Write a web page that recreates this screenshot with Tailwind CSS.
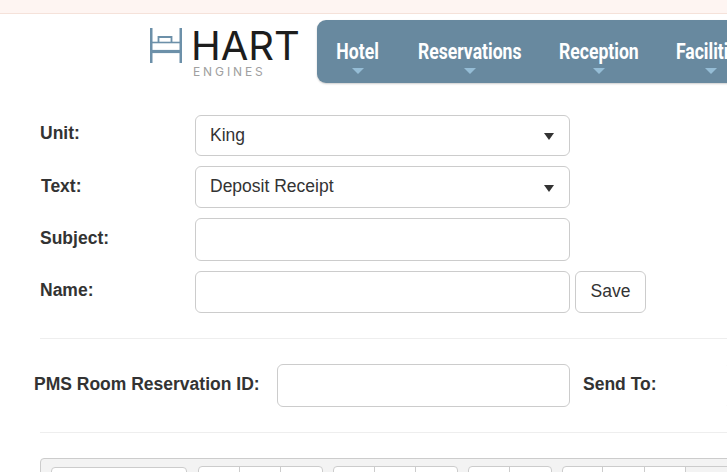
<!DOCTYPE html>
<html>
<head>
<meta charset="utf-8">
<script src="https://cdn.jsdelivr.net/npm/@tailwindcss/browser@4"></script>
</head>
<body class="bg-white overflow-hidden">
<div class="w-[727px] h-[472px] overflow-hidden font-['Liberation_Sans',Arial,sans-serif] text-[#333]">
  <div class="h-[14px] bg-[#fef5f2] border-b border-[#f5e2da]"></div>
  <header class="flex items-start h-[69px] pt-[6px]">
    <div class="relative w-[317px] h-[63px] shrink-0">
      <svg class="absolute left-[150px] top-[8px]" width="32" height="35" viewBox="0 0 32 35" fill="none" stroke="#6c90a9">
        <path d="M1.25 0v35M30.75 0v35" stroke-width="2.5"/>
        <path d="M1 23.5h30" stroke-width="3.2"/>
        <path d="M1 14.5h30" stroke-width="1.6"/>
        <path d="M8.5 14V9h13v5" stroke-width="1.8"/>
      </svg>
      <div class="absolute left-[191px] top-[7px] text-[40px] leading-[38px] text-[#1d1d1d] font-['Inter',sans-serif] font-normal">HART</div>
      <div class="absolute left-[193px] top-[45px] text-[12px] leading-[14px] text-[#a0a0a0] tracking-[2.9px] font-['Inter',sans-serif]">ENGINES</div>
    </div>
    <nav class="flex h-[63px] w-[460px] shrink-0 rounded-l-[9px] bg-[#68899f] shadow-[0_1px_2px_rgba(0,0,0,0.2)] pl-[19px] gap-[38px] text-white font-bold font-['Roboto',sans-serif] text-[22px]">
      <div class="w-[44px] flex flex-col items-center pt-[20px]"><span class="leading-[24px] scale-x-[0.8] whitespace-nowrap">Hotel</span><span class="mt-[4px] w-0 h-0 border-x-[6px] border-x-transparent border-t-[6px] border-t-[#95bdd6]"></span></div>
      <div class="w-[103px] flex flex-col items-center pt-[20px]"><span class="leading-[24px] scale-x-[0.8] whitespace-nowrap">Reservations</span><span class="mt-[4px] w-0 h-0 border-x-[6px] border-x-transparent border-t-[6px] border-t-[#95bdd6]"></span></div>
      <div class="w-[79px] flex flex-col items-center pt-[20px]"><span class="leading-[24px] scale-x-[0.8] whitespace-nowrap">Reception</span><span class="mt-[4px] w-0 h-0 border-x-[6px] border-x-transparent border-t-[6px] border-t-[#95bdd6]"></span></div>
      <div class="w-[70px] flex flex-col items-center pt-[20px]"><span class="leading-[24px] scale-x-[0.8] whitespace-nowrap">Facilities</span><span class="mt-[4px] w-0 h-0 border-x-[6px] border-x-transparent border-t-[6px] border-t-[#95bdd6]"></span></div>
    </nav>
  </header>
  <main class="pt-[32px] pl-[40px]">
    <div class="flex flex-col gap-[10px]">
      <div class="flex items-start h-[41px]">
        <label class="w-[155px] shrink-0 font-bold text-[17.5px] leading-[37px]">Unit:</label>
        <div class="w-[375px] h-[41px] border border-[#ccc] rounded-[6px] pl-[14px] pr-[15px] flex items-center justify-between text-[17.5px]"><span>King</span><span class="w-0 h-0 border-x-[5px] border-x-transparent border-t-[7px] border-t-[#333] mt-[2px]"></span></div>
      </div>
      <div class="flex items-start h-[42px]">
        <label class="w-[155px] shrink-0 font-bold text-[17.5px] leading-[40px] pl-px">Text:</label>
        <div class="w-[375px] h-[42px] border border-[#ccc] rounded-[6px] pl-[14px] pr-[15px] flex items-center justify-between text-[17.5px]"><span class="-mt-[1px]">Deposit Receipt</span><span class="w-0 h-0 border-x-[5px] border-x-transparent border-t-[7px] border-t-[#333] mt-[3px]"></span></div>
      </div>
      <div class="flex items-start h-[43px]">
        <label class="w-[155px] shrink-0 font-bold text-[17.5px] leading-[40px]">Subject:</label>
        <div class="w-[375px] h-[43px] border border-[#ccc] rounded-[6px]"></div>
      </div>
      <div class="flex items-start h-[42px]">
        <label class="w-[155px] shrink-0 font-bold text-[17.5px] leading-[38px]">Name:</label>
        <div class="w-[375px] h-[42px] border border-[#ccc] rounded-[6px]"></div>
        <button class="ml-[5px] w-[71px] h-[42px] pb-[2px] border border-[#ccc] rounded-[6px] text-[17.5px] bg-white">Save</button>
      </div>
    </div>
    <div class="mt-[25px] h-px bg-[#eee]"></div>
    <div class="flex items-start h-[43px] mt-[25px] -ml-[6px]">
      <label class="w-[243px] shrink-0 font-bold text-[17.5px] leading-[40px] whitespace-nowrap">PMS Room Reservation ID:</label>
      <div class="w-[293px] h-[43px] shrink-0 border border-[#ccc] rounded-[6px]"></div>
      <label class="ml-[13px] w-[142px] shrink-0 font-bold text-[17.5px] leading-[40px] whitespace-nowrap">Send To:</label>
      <div class="w-[100px] h-[43px] shrink-0 border border-[#ccc] border-l-transparent rounded-[6px]"></div>
    </div>
    <div class="mt-[25px] h-px bg-[#eee]"></div>
    <div class="mt-[25px] w-[720px] h-[60px] border border-[#ccc] rounded-[4px] bg-[#f3f3f3] flex items-start pl-[10px] pt-[7px]">
      <div class="w-[136px] h-[40px] mt-px bg-white border border-[#ccc] rounded-[4px] shrink-0"></div>
      <div class="ml-[11px] flex h-[40px] w-[125px] shrink-0 bg-white border border-[#ccc] rounded-[4px] divide-x divide-[#ccc]"><span class="w-[41px]"></span><span class="w-[41px]"></span><span class="flex-1"></span></div>
      <div class="ml-[10px] flex h-[40px] w-[125px] shrink-0 bg-white border border-[#ccc] rounded-[4px] divide-x divide-[#ccc]"><span class="w-[41px]"></span><span class="w-[41px]"></span><span class="flex-1"></span></div>
      <div class="ml-[10px] flex h-[40px] w-[84px] shrink-0 bg-white border border-[#ccc] rounded-[4px] divide-x divide-[#ccc]"><span class="w-[41px]"></span><span class="flex-1"></span></div>
      <div class="ml-[10px] flex h-[40px] w-[170px] shrink-0 bg-white border border-[#ccc] rounded-[4px] divide-x divide-[#ccc]"><span class="w-[40px]"></span><span class="w-[42px]"></span><span class="w-[41px]"></span><span class="flex-1 bg-[#f3f3f3]"></span></div>
    </div>
  </main>
</div>
</body>
</html>
